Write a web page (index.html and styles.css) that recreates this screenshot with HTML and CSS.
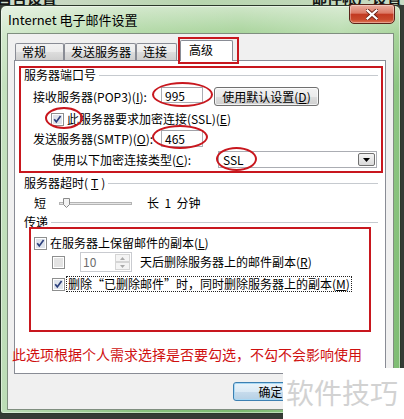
FILE: index.html
```html
<!DOCTYPE html>
<html lang="zh-CN">
<head>
<meta charset="utf-8">
<title>Internet 电子邮件设置</title>
<link rel="stylesheet" href="styles.css">
</head>
<body>
<div class="bg-strip"><span class="bg-text bg-left">自否设置</span><span class="bg-text bg-right">邮件帐户设置</span></div>
<div class="window">
  <div class="titlebar">
    <div class="title">Internet 电子邮件设置</div>
    <div class="close">
      <svg width="12" height="11" viewBox="0 0 12 11"><path d="M1.5 1.5 L10.5 9.5 M10.5 1.5 L1.5 9.5" stroke="#6a2114" stroke-width="4" stroke-linecap="square"/><path d="M1.5 1.5 L10.5 9.5 M10.5 1.5 L1.5 9.5" stroke="#ffffff" stroke-width="2.2" stroke-linecap="square"/></svg>
    </div>
  </div>
  <div class="dialog">
    <div class="tabs">
      <div class="tab t1">常规</div>
      <div class="tab t2">发送服务器</div>
      <div class="tab t3">连接</div>
      <div class="tab active">高级</div>
    </div>
    <div class="panel">
      <div class="group">服务器端口号</div>
      <div class="row r-pop">
        <span class="label">接收服务器(POP3)(<u>I</u>):</span>
        <span class="input">995</span>
        <span class="btn">使用默认设置(<u>D</u>)</span>
      </div>
      <div class="row r-ssl">
        <svg class="cb" width="13" height="13" viewBox="0 0 13 13"><rect x=".5" y=".5" width="12" height="12" fill="#fff" stroke="#8e8f8f"/><rect x="2" y="2" width="9" height="9" fill="#dfe4ec"/><path d="M3.2 6.3l2.1 2.6 4.3-5.8" fill="none" stroke="#2b3f7c" stroke-width="1.7"/></svg>
        <span class="cb-text">此服务器要求加密连接(SSL)(<u>E</u>)</span>
      </div>
      <div class="row r-smtp">
        <span class="label">发送服务器(SMTP)(<u>O</u>):</span>
        <span class="input">465</span>
      </div>
      <div class="row r-type">
        <span class="label label-type">使用以下加密连接类型(<u>C</u>):</span>
        <span class="select"><span class="select-val">SSL</span><span class="dd"><svg width="7" height="4" viewBox="0 0 7 4"><path d="M0 0h7L3.5 4z" fill="#000"/></svg></span></span>
      </div>
      <div class="group g2">服务器超时(<u>T</u>)</div>
      <div class="row r-slider">
        <span>短</span>
        <svg class="slider" width="73" height="12" viewBox="0 0 73 12"><rect x=".5" y="5.5" width="72" height="2" fill="#e6e6e6" stroke="#b4b4b4"/><path d="M4.5 1.5h6v6l-3 3-3-3z" fill="#f3f3f3" stroke="#8a8a8a"/></svg>
        <span class="long">长&nbsp;&nbsp;1&nbsp;&nbsp;分钟</span>
      </div>
      <div class="group g3">传递</div>
      <div class="row r-keep">
        <svg class="cb" width="13" height="13" viewBox="0 0 13 13"><rect x=".5" y=".5" width="12" height="12" fill="#fff" stroke="#8e8f8f"/><rect x="2" y="2" width="9" height="9" fill="#dfe4ec"/><path d="M3.2 6.3l2.1 2.6 4.3-5.8" fill="none" stroke="#2b3f7c" stroke-width="1.7"/></svg>
        <span class="cb-text">在服务器上保留邮件的副本(<u>L</u>)</span>
      </div>
      <div class="row r-days">
        <svg class="cb" width="13" height="13" viewBox="0 0 13 13"><rect x=".5" y=".5" width="12" height="12" fill="#fff" stroke="#8e8f8f"/><rect x="2" y="2" width="9" height="9" fill="#e3e3e3"/></svg>
        <span class="spin"><span class="spin-val">10</span><span class="spin-btns"><span class="sb"><svg width="5" height="3" viewBox="0 0 5 3"><path d="M0 3h5L2.5 0z" fill="#a9a9a9"/></svg></span><span class="sb"><svg width="5" height="3" viewBox="0 0 5 3"><path d="M0 0h5L2.5 3z" fill="#a9a9a9"/></svg></span></span></span>
        <span class="days-text">天后删除服务器上的邮件副本(<u>R</u>)</span>
      </div>
      <div class="row r-del">
        <svg class="cb" width="13" height="13" viewBox="0 0 13 13"><rect x=".5" y=".5" width="12" height="12" fill="#fff" stroke="#8e8f8f"/><rect x="2" y="2" width="9" height="9" fill="#dfe4ec"/><path d="M3.2 6.3l2.1 2.6 4.3-5.8" fill="none" stroke="#2b3f7c" stroke-width="1.7"/></svg>
        <span class="focus-text">删除“已删除邮件”时，同时删除服务器上的副本(<u>M</u>)</span>
      </div>
    </div>
    <div class="footer">
      <span class="fbtn ok">确定</span>
      <span class="fbtn"></span>
    </div>
  </div>
</div>

<div class="anno rect a-tab"></div>
<div class="anno rect a-r1"></div>
<div class="anno rect a-r2"></div>
<div class="anno ell e1"></div>
<div class="anno ell e2"></div>
<div class="anno ell e3"></div>
<div class="anno ell e4"></div>
<div class="anno note">此选项根据个人需求选择是否要勾选，不勾不会影响使用</div>
<div class="watermark">软件技巧</div>
</body>
</html>
```

FILE: styles.css
```css
* { box-sizing: border-box; }
html, body { margin: 0; padding: 0; }
body {
  width: 404px;
  height: 419px;
  overflow: hidden;
  position: relative;
  background: #353b35;
  font-family: "Noto Sans CJK SC", "Noto Sans", sans-serif;
  font-size: 12px;
  line-height: 16px;
  color: #000;
}
u { text-decoration: underline; }

.bg-strip {
  height: 5px;
  overflow: hidden;
  display: flex;
  align-items: flex-end;
  background: linear-gradient(to right, #cfdacb, #b7d5ae 50%, #c9dbc4);
}
.bg-text {
  flex: none;
  font-size: 15px;
  line-height: 15px;
  font-weight: bold;
  color: #151515;
}
.bg-left { margin-left: -3px; }
.bg-right { margin-left: auto; margin-right: 2px; }

.window {
  width: 401px;
  height: 409px;
  border: 1px solid #2b382b;
  border-radius: 6px 6px 3px 3px;
  background:
    linear-gradient(to right, rgba(255,255,255,.5), rgba(255,255,255,.1) 35%, rgba(255,255,255,0) 60%, rgba(255,255,255,.2) 85%, rgba(255,255,255,0)),
    linear-gradient(to bottom, #cfe6c8, #a6d399 30px, #8cc581 80px, #7cbb70);
  display: flex;
  flex-direction: column;
  box-shadow: inset 0 0 0 1px rgba(255,255,255,.45);
}

.titlebar {
  flex: none;
  height: 27px;
  display: flex;
  align-items: center;
  padding: 0 5px 0 7px;
}
.title {
  font-size: 13px;
  line-height: 16px;
  color: #000;
}
.close {
  margin-left: auto;
  align-self: flex-start;
  margin-top: -2px;
  width: 46px;
  height: 20px;
  border: 1px solid #5a2319;
  border-radius: 3px 3px 5px 5px;
  background: linear-gradient(to bottom, #eab0a2 0%, #dc7a66 45%, #c23a22 52%, #c9492c 80%, #dd7656 100%);
  box-shadow: inset 0 0 0 1px rgba(255,255,255,.35);
  display: flex;
  align-items: center;
  justify-content: center;
}

.dialog {
  flex: none;
  height: 377px;
  margin: 0 6px;
  border: 1px solid #7f8e7f;
  background: #f0f0f0;
  display: flex;
  flex-direction: column;
}

.tabs {
  flex: none;
  height: 26px;
  padding: 6px 0 0 7px;
  display: flex;
  align-items: flex-end;
  position: relative;
  z-index: 1;
}
.tab {
  flex: none;
  height: 17px;
  padding-left: 6px;
  border: 1px solid #898c95;
  border-bottom: none;
  border-radius: 2px 2px 0 0;
  background: linear-gradient(to bottom, #f2f2f2 0%, #ebebeb 50%, #dddddd 51%, #cfcfcf 100%);
  line-height: 15px;
  white-space: nowrap;
}
.t1 { width: 49px; }
.t2 { width: 72px; }
.t3 { width: 41px; }
.tab.active {
  width: 53px;
  height: 21px;
  margin-left: 3px;
  margin-bottom: -1px;
  padding-left: 8px;
  background: #fff;
  line-height: 18px;
}

.panel {
  flex: none;
  margin-left: 6px;
  width: 372px;
  height: 314px;
  border: 1px solid #898c95;
  background: #fff;
  padding: 6px 7px 0 9px;
  display: flex;
  flex-direction: column;
}

.group {
  flex: none;
  height: 16px;
  display: flex;
  align-items: center;
  gap: 3px;
  white-space: nowrap;
}
.group::after {
  content: "";
  flex: 1;
  height: 1px;
  background: #c6cacf;
}
.g2 { margin-top: 7px; }
.g3 { margin-top: 3px; }

.row {
  flex: none;
  display: flex;
  align-items: center;
  white-space: nowrap;
}
.label { flex: none; width: 128px; }
.label-type { width: 166px; }

.r-pop { margin-top: 4px; height: 19px; padding-left: 9px; }
.r-ssl { margin-top: 6px; height: 14px; padding-left: 27px; }
.r-smtp { margin-top: 4px; height: 17px; padding-left: 9px; }
.r-type { margin-top: 4px; height: 17px; padding-left: 28px; }
.r-slider { margin-top: 4px; height: 16px; padding-left: 10px; }
.r-keep { margin-top: 6px; height: 14px; padding-left: 10px; }
.r-days { margin-top: 2px; height: 20px; padding-left: 28px; }
.r-del { margin-top: 4px; height: 16px; padding-left: 28px; }

.cb { flex: none; display: block; }
.cb-text { margin-left: 3px; }

.input {
  flex: none;
  width: 42px;
  height: 17px;
  border: 1px solid #abadb3;
  border-top-color: #a0a2a8;
  background: #fff;
  padding-left: 3px;
  line-height: 15px;
}
.r-pop .input { height: 16px; margin-top: -3px; }

.btn {
  flex: none;
  margin-left: 11px;
  width: 105px;
  height: 19px;
  border: 1px solid #707070;
  border-radius: 3px;
  background: linear-gradient(to bottom, #f2f2f2 0%, #ebebeb 50%, #dddddd 51%, #cfcfcf 100%);
  box-shadow: inset 0 0 0 1px rgba(255,255,255,.7);
  display: flex;
  align-items: center;
  justify-content: center;
  line-height: 15px;
}

.select {
  flex: none;
  width: 159px;
  height: 17px;
  border: 1px solid #abadb3;
  background: #fff;
  display: flex;
  align-items: center;
  padding-left: 4px;
  line-height: 15px;
}
.dd {
  margin-left: auto;
  margin-right: 1px;
  width: 17px;
  height: 13px;
  border: 1px solid #707070;
  border-radius: 2px;
  background: linear-gradient(to bottom, #f4f4f4, #dadada);
  display: flex;
  align-items: center;
  justify-content: center;
}
.dd svg { display: block; }

.slider { flex: none; display: block; margin-left: 13px; }
.long { margin-left: 15px; }

.spin {
  flex: none;
  margin-left: 15px;
  width: 52px;
  height: 20px;
  border: 1px solid #c9cbd0;
  background: #fff;
  display: flex;
  align-items: stretch;
}
.spin-val {
  flex: 1;
  padding-left: 2px;
  color: #6d6d6d;
  line-height: 18px;
}
.spin-btns {
  flex: none;
  width: 16px;
  display: flex;
  flex-direction: column;
  padding: 1px 1px 1px 0;
}
.sb {
  flex: 1;
  border: 1px solid #d5d5d5;
  background: #f4f4f4;
  display: flex;
  align-items: center;
  justify-content: center;
}
.sb svg { display: block; }
.days-text { margin-left: 8px; }

.focus-text {
  margin-left: 1px;
  border: 1px dotted #222;
  padding: 0 1px;
  line-height: 14px;
}

.footer {
  flex: 1;
  display: flex;
  justify-content: flex-end;
  align-items: flex-start;
  padding: 8px 4px 0 0;
  gap: 6px;
}
.fbtn {
  flex: none;
  width: 75px;
  height: 19px;
  border: 1px solid #707070;
  border-radius: 3px;
  background: linear-gradient(to bottom, #f2f2f2 0%, #ebebeb 50%, #dddddd 51%, #cfcfcf 100%);
  display: flex;
  align-items: center;
  justify-content: center;
  line-height: 15px;
}
.fbtn.ok {
  border-color: #3c7fb1;
  background: linear-gradient(to bottom, #eaf4fb 0%, #dbeaf5 50%, #c7dcec 51%, #b6d0e5 100%);
  box-shadow: inset 0 0 0 1px #a8d8f4;
}

/* red annotations drawn over the screenshot */
.anno { position: absolute; pointer-events: none; }
.rect { border: 2px solid #c8171e; }
.ell { border: 2px solid #c8171e; border-radius: 50%; }
.a-tab { left: 178px; top: 37px; width: 61px; height: 27px; }
.a-r1 { left: 19px; top: 66px; width: 364px; height: 107px; }
.a-r2 { left: 29px; top: 227px; width: 342px; height: 105px; }
.e1 { left: 152px; top: 82px; width: 61px; height: 25px; }
.e2 { left: 45px; top: 107px; width: 38px; height: 22px; }
.e3 { left: 152px; top: 125px; width: 56px; height: 24px; }
.e4 { left: 216px; top: 147px; width: 41px; height: 24px; }
.note {
  left: 12px;
  top: 345px;
  font-size: 14px;
  line-height: 18px;
  color: #cf1010;
  white-space: nowrap;
}

.watermark {
  position: absolute;
  left: 283px;
  top: 368px;
  width: 121px;
  height: 51px;
  background: #fff;
  display: flex;
  align-items: center;
  padding: 0 0 4px 3px;
  font-size: 28px;
  line-height: 32px;
  color: #d2d2d2;
  white-space: nowrap;
}
```
